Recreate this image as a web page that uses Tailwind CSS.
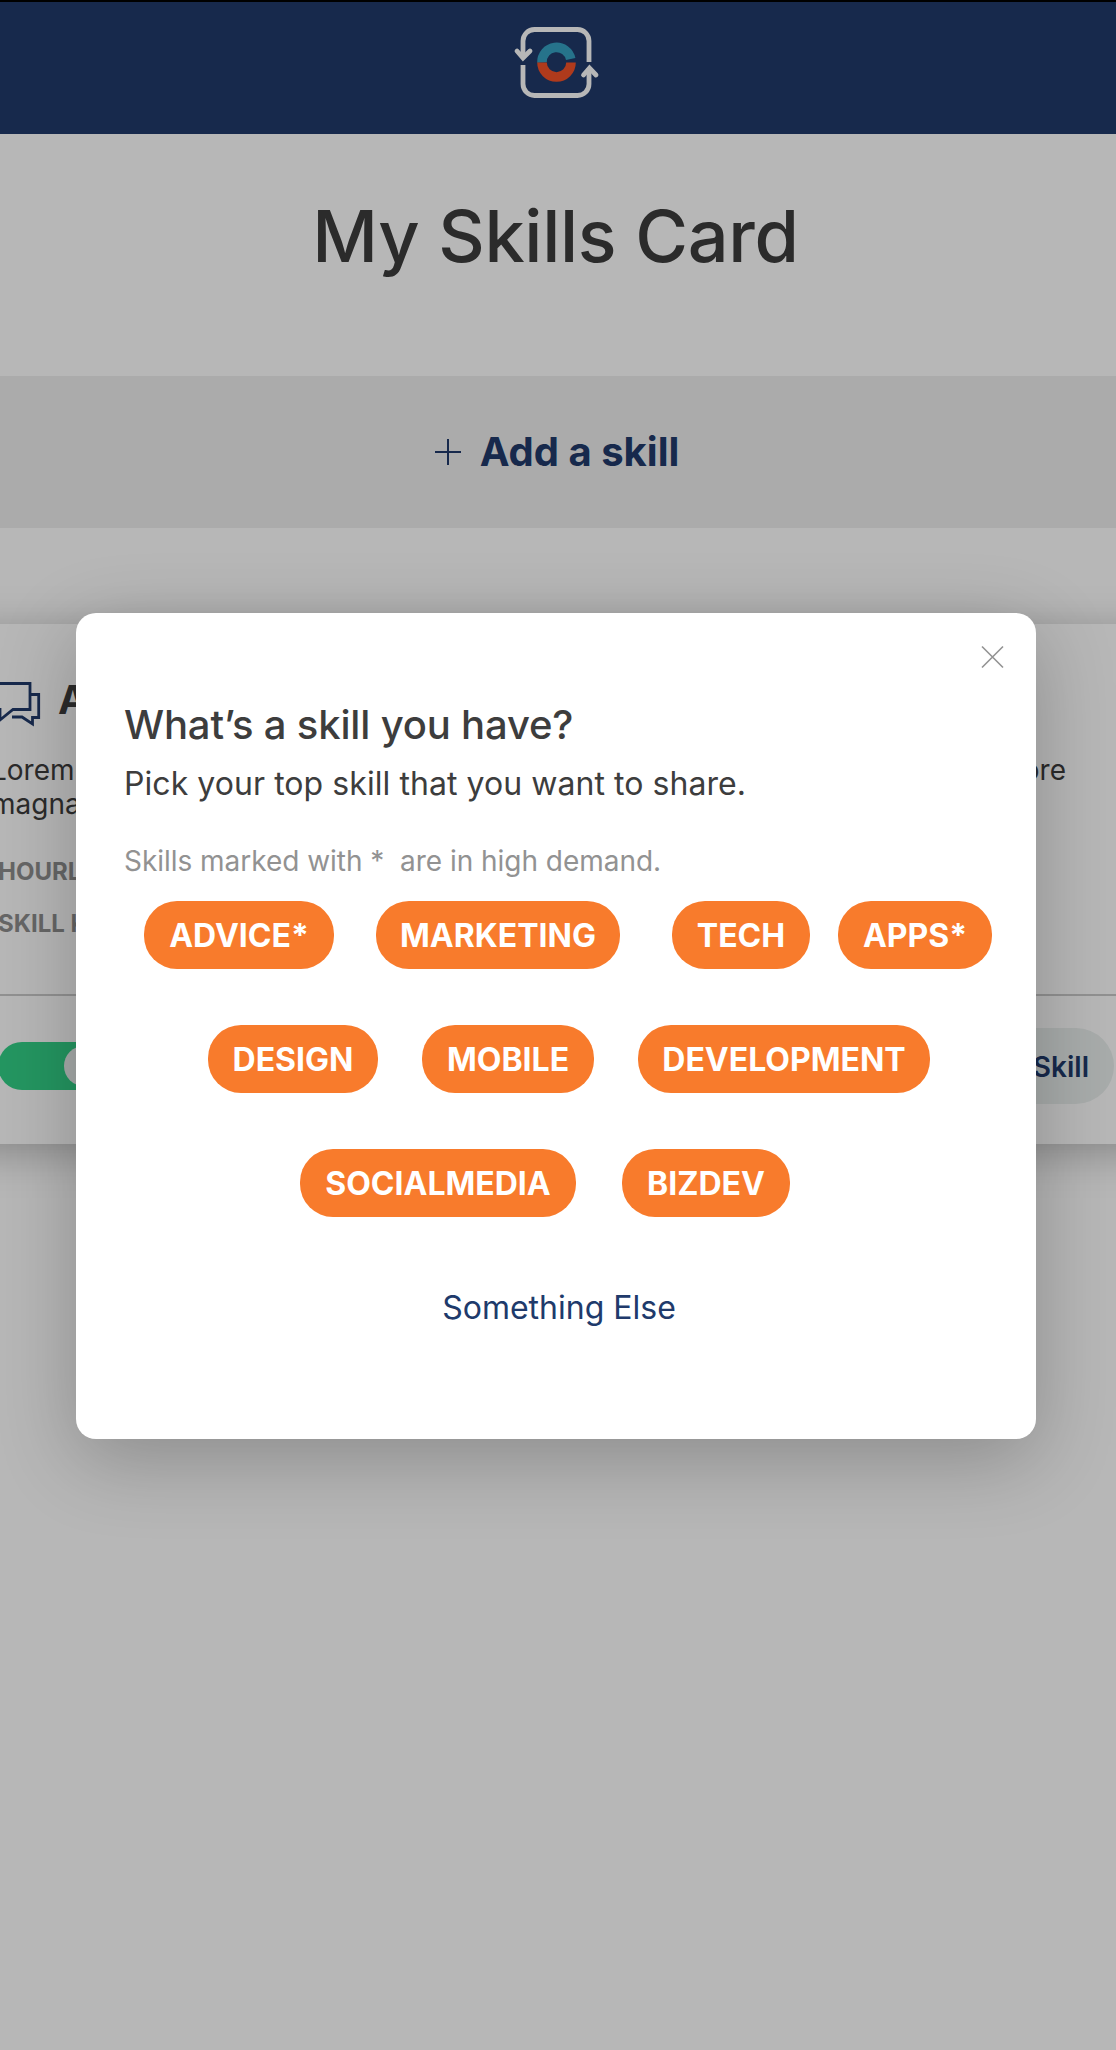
<!DOCTYPE html>
<html lang="en">
<head>
<meta charset="utf-8">
<title>My Skills Card</title>
<script src="https://cdn.jsdelivr.net/npm/@tailwindcss/browser@4"></script>
</head>
<body class="font-['Inter',sans-serif] bg-white text-[#3d3d3d]">
<div class="relative w-[1116px] h-[2050px] overflow-hidden">
  <header class="h-[134px] border-t-2 border-black bg-[#203a6b] flex justify-center">
    <svg class="w-[90px] h-[90px] mt-[18px] ml-[-4px]" viewBox="511 20 90 90" fill="none">
      <g stroke="#fff" stroke-width="4.800">
        <path d="M523 58V41a11.500 11.500 0 0 1 11.500-11.500H577.500A11.500 11.500 0 0 1 589 41V62"/>
        <path d="M523 65V84a11.500 11.500 0 0 0 11.500 11.500H577.500A11.500 11.500 0 0 0 589 84V68"/>
        <path d="M517 51l6 7 7-7M583.500 75l6-7 6.500 7" stroke-linecap="round"/>
      </g>
      <path d="M542 62.500a14.500 14.500 0 0 1 28.700-3.500" stroke="#35a0c2" stroke-width="9.600"/>
      <path d="M542 62.500a14.500 14.500 0 0 0 29 0" stroke="#f45128" stroke-width="9.600"/>
    </svg>
  </header>
  <main>
    <div class="h-[242px] pt-[58px] text-center">
      <h1 class="text-[72px] leading-[87px] font-medium tracking-[-0.3px] ml-[-5px]">My Skills Card</h1>
    </div>
    <button class="w-full h-[152px] pr-[3px] bg-[#efefef] flex items-center justify-center gap-[18px] text-[#203a6b] text-[40px] font-bold">
      <svg class="w-[28px] h-[28px]" viewBox="0 0 28 28" fill="none" stroke="currentColor" stroke-width="2"><path d="M14 1v26M1 14h26"/></svg>
      <span>Add a skill</span>
    </button>
    <article class="mt-[96px] -mx-10 h-[520px] px-9 bg-white shadow-[0_8px_40px_rgba(0,0,0,0.27)]">
      <div class="h-[370px] pt-[49px]">
        <div class="flex items-center h-[60px] ml-[-4px]">
          <svg class="w-[52px] h-[50px]" viewBox="-8 677 52 50" fill="none" stroke="#203a6b" stroke-width="2.800"><path d="M-7 682.500H30V708.500H13L0 719V708.500H-7M30 693.500H38.700V716.500H32.500V723L22 716H12"/></svg>
          <h2 class="ml-[14px] mt-[-7px] text-[40px] font-bold">Advice</h2>
        </div>
        <div class="flex justify-between mt-[20px] ml-[-5px] text-[28px] leading-[34px]">
          <p>Lorem ipsum dolor sit amet,<br>magna aliqua.</p>
          <p class="mr-[54px]">labore</p>
        </div>
        <p class="mt-[36px] ml-[2px] text-[24px] leading-[30px] font-bold text-[#8e8e8e]">HOURLY RATE</p>
        <p class="mt-[22px] ml-[2px] text-[24px] leading-[30px] font-bold text-[#8e8e8e]">SKILL KEY</p>
      </div>
      <div class="border-t-2 border-[#cbcbcb] h-[150px] pt-8 flex justify-between">
        <div class="mt-[14px] ml-[2px] w-[106px] h-[48px] rounded-full bg-[#33d288] flex items-center justify-end"><span class="w-10 h-10 rounded-full bg-[#ebf0ef]"></span></div>
        <button class="mr-[6px] h-[76px] pt-[2px] pl-[26px] pr-[25px] rounded-full bg-[#ebf0ef] text-[#203a6b] text-[28px] font-semibold">Edit Skill</button>
      </div>
    </article>
  </main>

  <div class="absolute inset-0 bg-black/[0.284] flex justify-center items-start pt-[613px] pr-[4px]">
    <section role="dialog" class="w-[960px] h-[826px] rounded-[20px] bg-white shadow-[0_20px_80px_rgba(0,0,0,0.24)] flex flex-col">
      <div class="flex justify-end pt-[32px] pr-[32px]">
        <svg class="w-[23px] h-[24px]" viewBox="0 0 23 24" fill="none" stroke="#929292" stroke-width="1.600"><path d="M1 1.500l21 21M22 1.500L1 22.500"/></svg>
      </div>
      <div class="pl-[48px] mt-[31px]">
        <h2 class="text-[40px] leading-[50px] font-medium tracking-[-0.17px]">What’s a skill you have?</h2>
        <p class="mt-[14px] text-[32px] leading-[40px] tracking-[0.06px]">Pick your top skill that you want to share.</p>
        <p class="mt-[40px] text-[28px] leading-[34px] tracking-[-0.03px] text-[#929292] whitespace-pre">Skills marked with *  are in high demand.</p>
      </div>
      <div class="mt-[23px] flex flex-col gap-[56px] text-[32px] font-bold text-white">
        <div class="flex pl-[68px]">
          <button class="h-[68px] w-[190px] pt-[2px] rounded-[33px] bg-[#f87b2c]">ADVICE*</button>
          <button class="ml-[42px] h-[68px] w-[244px] pt-[2px] rounded-[33px] bg-[#f87b2c]">MARKETING</button>
          <button class="ml-[52px] h-[68px] w-[138px] pt-[2px] rounded-[33px] bg-[#f87b2c]">TECH</button>
          <button class="ml-[28px] h-[68px] w-[154px] pt-[2px] rounded-[33px] bg-[#f87b2c]">APPS*</button>
        </div>
        <div class="flex pl-[132px]">
          <button class="h-[68px] w-[170px] pt-[2px] rounded-[33px] bg-[#f87b2c]">DESIGN</button>
          <button class="ml-[44px] h-[68px] w-[172px] pt-[2px] rounded-[33px] bg-[#f87b2c]">MOBILE</button>
          <button class="ml-[44px] h-[68px] w-[292px] pt-[2px] rounded-[33px] bg-[#f87b2c]">DEVELOPMENT</button>
        </div>
        <div class="flex pl-[224px]">
          <button class="h-[68px] w-[276px] pt-[2px] rounded-[33px] bg-[#f87b2c]">SOCIALMEDIA</button>
          <button class="ml-[46px] h-[68px] w-[168px] pt-[2px] rounded-[33px] bg-[#f87b2c]">BIZDEV</button>
        </div>
      </div>
      <a class="mt-[71px] self-center ml-[6px] text-[32px] leading-[40px] text-[#203a6b]">Something Else</a>
    </section>
  </div>
</div>
</body>
</html>
